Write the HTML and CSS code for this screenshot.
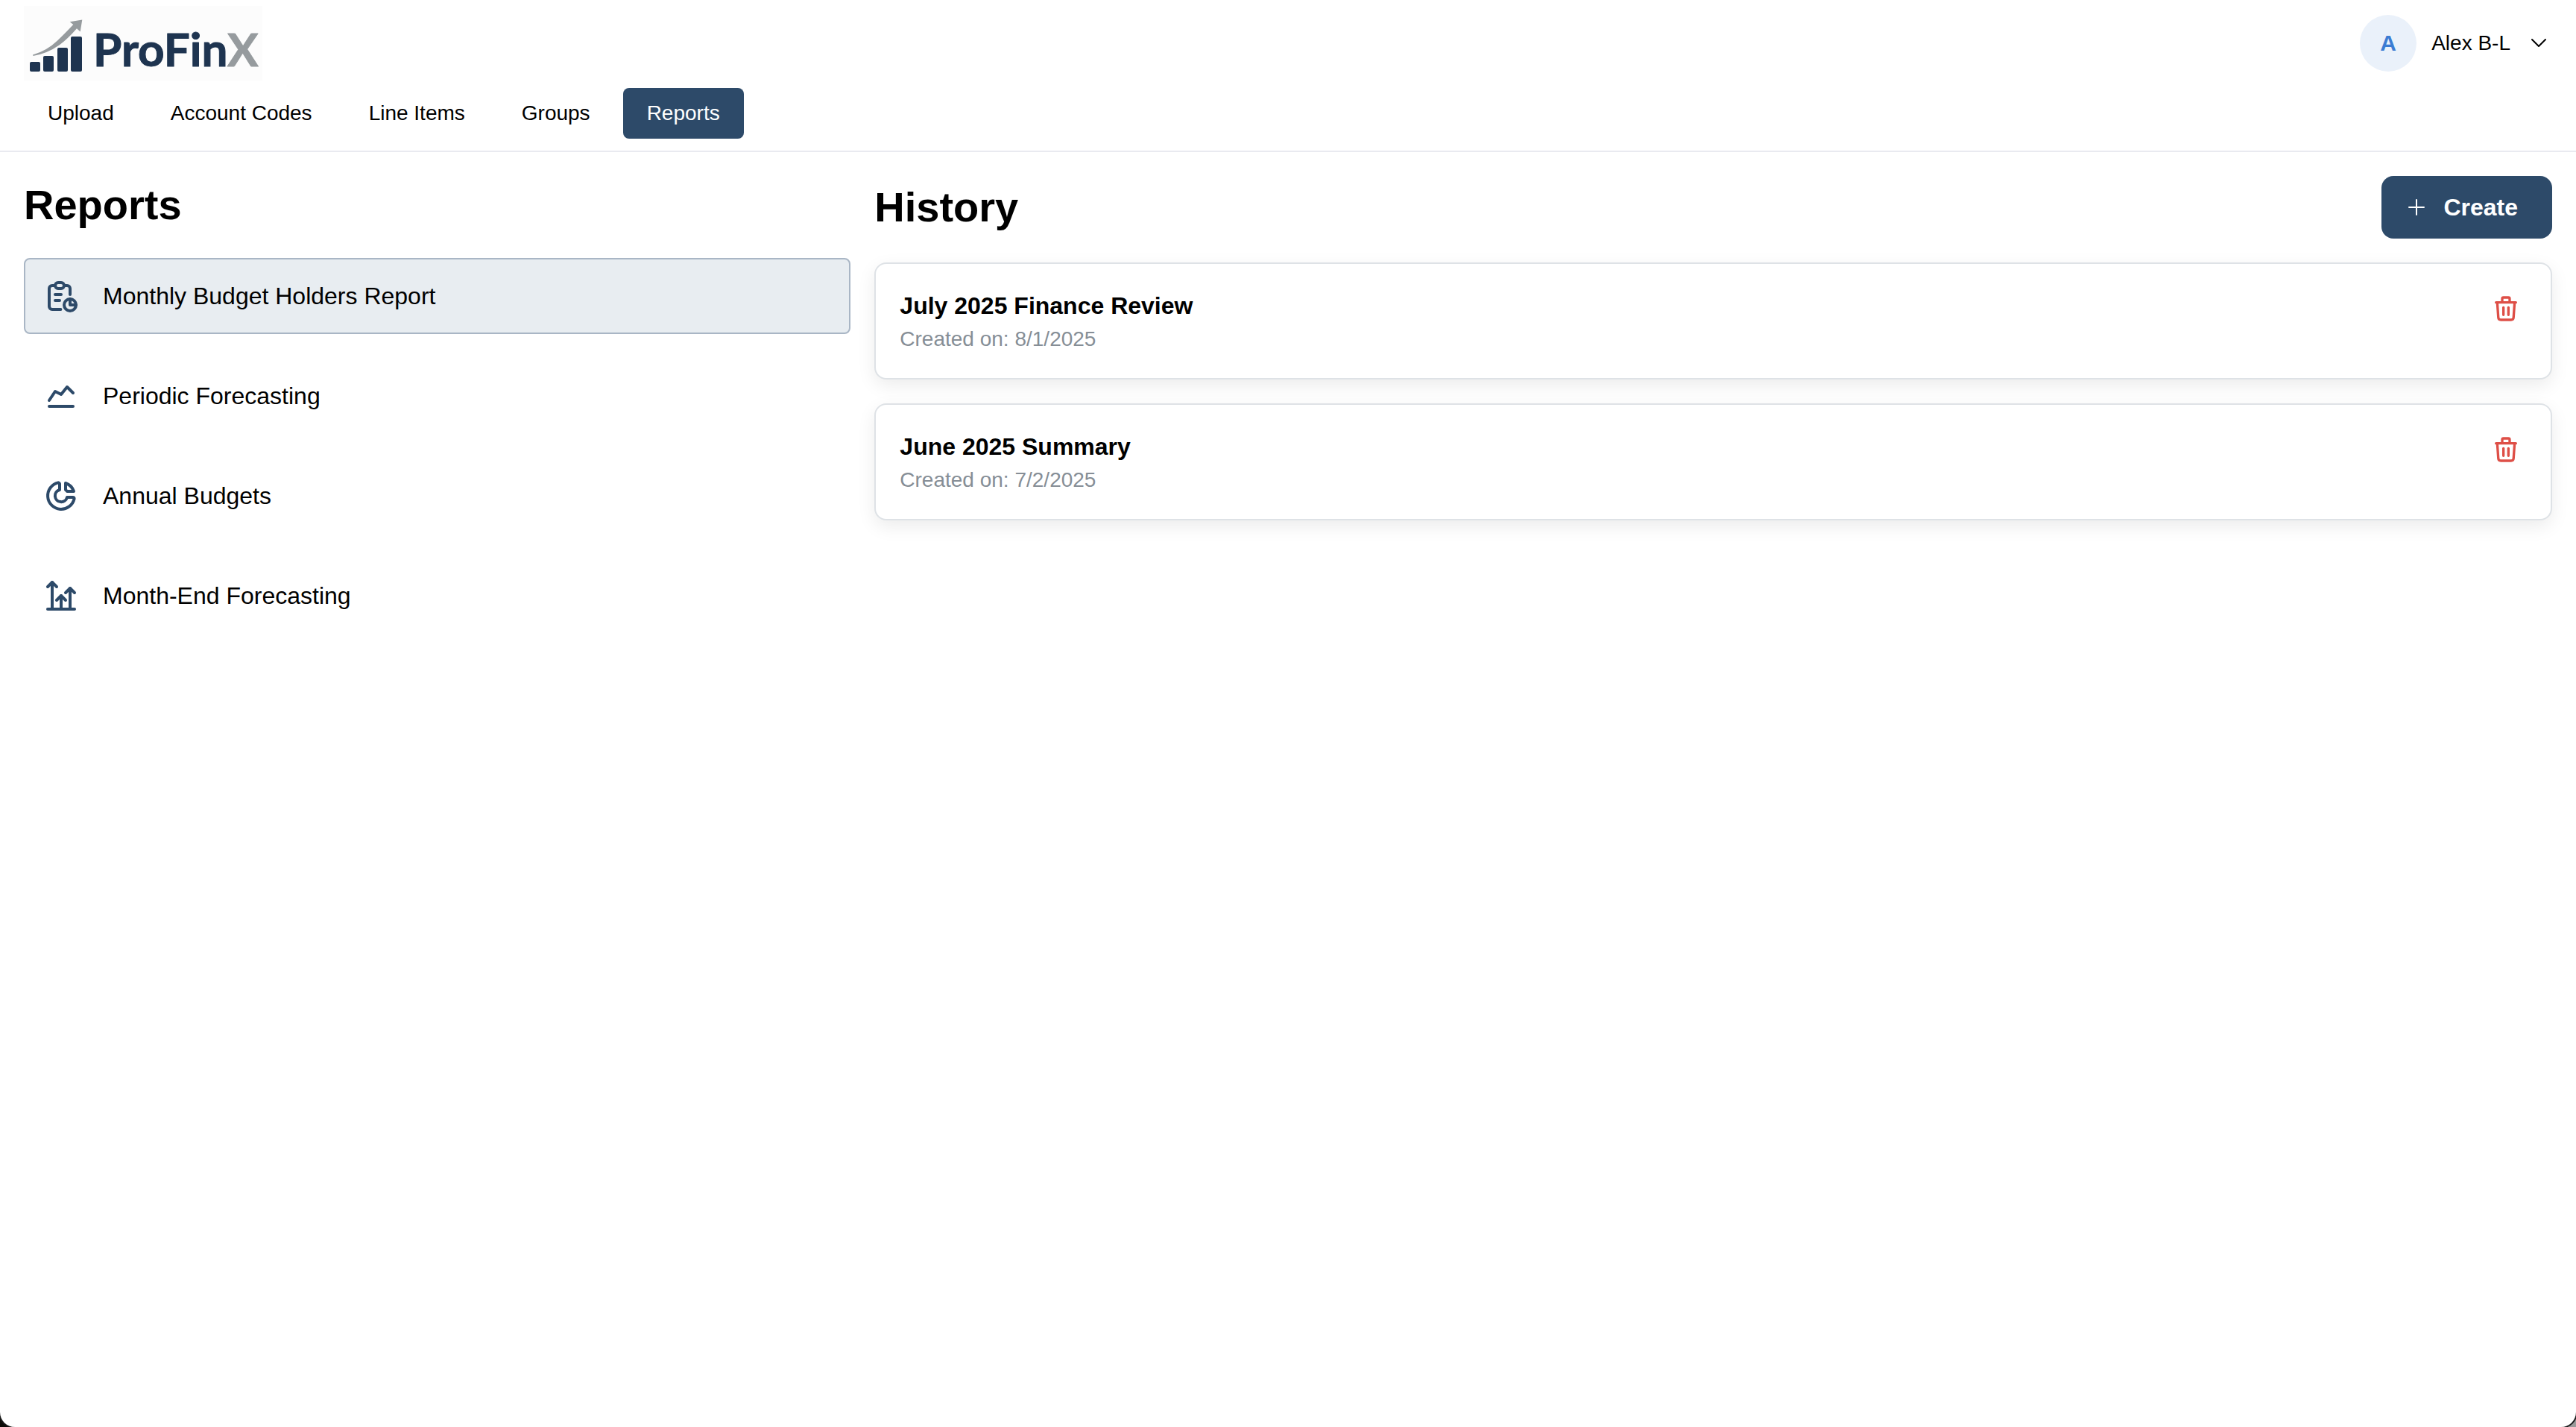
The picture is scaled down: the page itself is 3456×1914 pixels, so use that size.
FILE: index.html
```
<!DOCTYPE html>
<html lang="en">
<head>
    <meta charset="UTF-8">
    <meta name="viewport" content="width=device-width, initial-scale=1.0">
    <title>ProFinX - Reports</title>
    <link rel="stylesheet" href="styles.css">
</head>
<body>
<header class="header">
    <div class="header-top">
        <svg class="logo" viewBox="0 0 320 100" role="img" aria-label="ProFinX">
            <g class="logo-navy">
                <rect x="8" y="75" width="14" height="13" rx="2"/>
                <rect x="26" y="67" width="14" height="21" rx="2"/>
                <rect x="45" y="56" width="14" height="32" rx="2"/>
                <rect x="63" y="41" width="15" height="47" rx="2"/>
            </g>
            <path class="logo-gray" d="M12 65.500Q31 60 45 46.500Q54 38 66.300 25L61.700 21.300L78.300 18.500L75.700 34.500L71 30.200Q59 44 47.500 52.500Q31 64 12.500 67Z"/>
            <text class="logo-text" x="93" y="81">ProFin<tspan class="logo-x">X</tspan></text>
        </svg>
        <button class="user-menu" type="button">
            <span class="avatar">A</span>
            <span>Alex B-L</span>
            <svg class="chevron" viewBox="0 0 36 36"><path d="M9 13l9 9l9 -9"/></svg>
        </button>
    </div>
    <nav class="tabs">
        <a class="tab" href="#">Upload</a>
        <a class="tab" href="#">Account Codes</a>
        <a class="tab" href="#">Line Items</a>
        <a class="tab" href="#">Groups</a>
        <a class="tab active" href="#">Reports</a>
    </nav>
</header>
<main class="main">
    <section class="reports">
        <h2 class="title">Reports</h2>
        <div class="report-list">
            <button class="report active" type="button">
                <svg class="icon" viewBox="0 0 24 24">
                    <path d="M8 5h-2a2 2 0 0 0 -2 2v12a2 2 0 0 0 2 2h5.697"/>
                    <path d="M18 14v4h4"/>
                    <path d="M18 11v-4a2 2 0 0 0 -2 -2h-2"/>
                    <rect x="8" y="3" width="6" height="4" rx="2"/>
                    <circle cx="18" cy="18" r="4"/>
                    <path d="M8 11h4"/>
                    <path d="M8 15h3"/>
                </svg>
                <span>Monthly Budget Holders Report</span>
            </button>
            <button class="report" type="button">
                <svg class="icon" viewBox="0 0 24 24">
                    <path d="M4 19h16"/>
                    <path d="M4 15l4 -6l4 2l4 -5l4 4"/>
                </svg>
                <span>Periodic Forecasting</span>
            </button>
            <button class="report" type="button">
                <svg class="icon" viewBox="0 0 24 24">
                    <path d="M10 3.200a9 9 0 1 0 10.800 10.800a1 1 0 0 0 -1 -1h-3.800a4.100 4.100 0 1 1 -5 -5v-4a.9 .9 0 0 0 -1 -.8"/>
                    <path d="M15 3.500a9 9 0 0 1 5.500 5.500h-4.500a9 9 0 0 0 -1 -1v-4.500"/>
                </svg>
                <span>Annual Budgets</span>
            </button>
            <button class="report" type="button">
                <svg class="icon" viewBox="0 0 24 24">
                    <path d="M18 21v-14"/>
                    <path d="M9 15l3 -3l3 3"/>
                    <path d="M15 10l3 -3l3 3"/>
                    <path d="M3 21h18"/>
                    <path d="M12 21v-9"/>
                    <path d="M3 6l3 -3l3 3"/>
                    <path d="M6 21v-18"/>
                </svg>
                <span>Month-End Forecasting</span>
            </button>
        </div>
    </section>
    <section class="history">
        <div class="history-header">
            <h2 class="title">History</h2>
            <button class="create-btn" type="button">
                <svg class="plus" viewBox="0 0 32 32"><path d="M16 6v20M6 16h20"/></svg>
                <span>Create</span>
            </button>
        </div>
        <div class="card-list">
            <article class="card">
                <div>
                    <h3 class="card-title">July 2025 Finance Review</h3>
                    <p class="card-date">Created on: 8/1/2025</p>
                </div>
                <button class="delete-btn" type="button" aria-label="Delete">
                    <svg class="trash" viewBox="0 0 24 24"><path d="M19 7l-.867 12.142A2 2 0 0 1 16.138 21H7.862a2 2 0 0 1 -1.995 -1.858L5 7m5 4v6m4 -6v6m1 -10V4a1 1 0 0 0 -1 -1h-4a1 1 0 0 0 -1 1v3M4 7h16"/></svg>
                </button>
            </article>
            <article class="card">
                <div>
                    <h3 class="card-title">June 2025 Summary</h3>
                    <p class="card-date">Created on: 7/2/2025</p>
                </div>
                <button class="delete-btn" type="button" aria-label="Delete">
                    <svg class="trash" viewBox="0 0 24 24"><path d="M19 7l-.867 12.142A2 2 0 0 1 16.138 21H7.862a2 2 0 0 1 -1.995 -1.858L5 7m5 4v6m4 -6v6m1 -10V4a1 1 0 0 0 -1 -1h-4a1 1 0 0 0 -1 1v3M4 7h16"/></svg>
                </button>
            </article>
        </div>
    </section>
</main>
</body>
</html>
```

FILE: styles.css
```
* {
    box-sizing: border-box;
}
html {
    background: linear-gradient(to right, #0c0b08 50%, #9a9a9a 50%);
}
body {
    margin: 0;
    min-height: 100vh;
    font-family: "Liberation Sans", Arial, sans-serif;
    font-size: 28px;
    color: #000;
    background-color: #fff;
    border-radius: 0 0 20px 20px;
    box-shadow: 0 0 0 2px #1a1a1a;
}
button {
    font: inherit;
    color: inherit;
    background: none;
    border: none;
    padding: 0;
    cursor: pointer;
}
svg {
    display: block;
    flex-shrink: 0;
    fill: none;
    stroke: currentColor;
    stroke-width: 2;
    stroke-linecap: round;
    stroke-linejoin: round;
}
.header {
    border-bottom: 2px solid #e9eaf0;
    padding: 8px 32px 16px;
}
.header-top {
    display: flex;
    justify-content: space-between;
    align-items: center;
    margin-bottom: 10px;
}
.logo {
    width: 320px;
    height: 100px;
    background-color: #fcfcfc;
    stroke: none;
}
.logo-text {
    font-family: Lato, sans-serif;
    font-size: 62px;
    font-weight: bold;
    fill: #1e3450;
    stroke: #1e3450;
    stroke-width: 1;
}
.logo-x {
    fill: #969b9e;
    stroke: #969b9e;
}
.logo-navy {
    fill: #1e3450;
}
.logo-gray {
    fill: #969b9e;
}
.user-menu {
    display: flex;
    align-items: center;
    gap: 20px;
}
.avatar {
    display: flex;
    align-items: center;
    justify-content: center;
    width: 76px;
    height: 76px;
    border-radius: 50%;
    background-color: #eaf1fa;
    color: #3b7cd3;
    font-size: 30px;
    font-weight: bold;
}
.chevron {
    width: 36px;
    height: 36px;
}
.tabs {
    display: flex;
    gap: 12px;
}
.tab {
    padding: 0 32px;
    line-height: 68px;
    border-radius: 8px;
    color: #000;
    text-decoration: none;
}
.tab.active {
    background-color: #2d4a69;
    color: #fff;
}
.main {
    display: grid;
    grid-template-columns: repeat(12, 1fr);
    gap: 32px;
    padding: 32px;
}
.reports {
    grid-column: span 4;
}
.history {
    grid-column: span 8;
}
.title {
    margin: 0;
    font-size: 56px;
    line-height: 78px;
}
.report-list {
    display: flex;
    flex-direction: column;
    gap: 32px;
    margin-top: 32px;
}
.report {
    display: flex;
    align-items: center;
    gap: 32px;
    height: 102px;
    padding: 0 24px;
    border: 2px solid transparent;
    border-radius: 8px;
    font-size: 32px;
}
.report.active {
    background-color: #e8edf1;
    border-color: #a9b6c5;
}
.icon {
    width: 48px;
    height: 48px;
    color: #2d4a69;
}
.history-header {
    display: flex;
    justify-content: space-between;
    align-items: center;
}
.create-btn {
    display: flex;
    align-items: center;
    gap: 20px;
    height: 84px;
    padding: 0 46px 0 31px;
    border-radius: 16px;
    background-color: #2d4a69;
    color: #fff;
    font-size: 32px;
    font-weight: bold;
}
.plus {
    width: 32px;
    height: 32px;
}
.card-list {
    display: flex;
    flex-direction: column;
    gap: 32px;
    margin-top: 32px;
}
.card {
    display: flex;
    justify-content: space-between;
    align-items: flex-start;
    padding: 32px;
    border: 2px solid #dee2e6;
    border-radius: 16px;
    background-color: #fff;
    box-shadow: 0 8px 24px rgba(0, 0, 0, 0.08);
}
.card-title {
    margin: 0;
    font-size: 32px;
    line-height: 48px;
}
.card-date {
    margin: 0;
    line-height: 41px;
    color: #868e96;
}
.delete-btn {
    display: flex;
    align-items: center;
    justify-content: center;
    width: 56px;
    height: 56px;
    color: #de4f47;
}
.trash {
    width: 40px;
    height: 40px;
}
```
